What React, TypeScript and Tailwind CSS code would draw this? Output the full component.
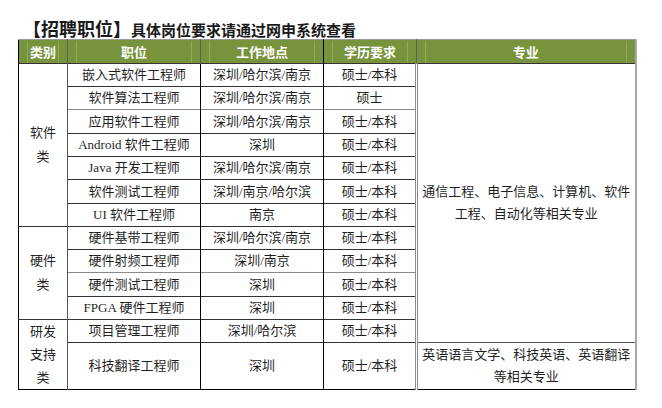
const rows: { cat?: { label: string[]; span: number }; job: string; place: string; edu: string; h: string }[] = [
  { cat: { label: ["软件", "类"], span: 7 }, job: "嵌入式软件工程师", place: "深圳/哈尔滨/南京", edu: "硕士/本科", h: "h-[23px]" },
  { job: "软件算法工程师", place: "深圳/哈尔滨/南京", edu: "硕士", h: "h-[23px]" },
  { job: "应用软件工程师", place: "深圳/哈尔滨/南京", edu: "硕士/本科", h: "h-[24px]" },
  { job: "Android 软件工程师", place: "深圳", edu: "硕士/本科", h: "h-[23px]" },
  { job: "Java 开发工程师", place: "深圳/哈尔滨/南京", edu: "硕士/本科", h: "h-[23px]" },
  { job: "软件测试工程师", place: "深圳/南京/哈尔滨", edu: "硕士/本科", h: "h-[24px]" },
  { job: "UI 软件工程师", place: "南京", edu: "硕士/本科", h: "h-[23px]" },
  { cat: { label: ["硬件", "类"], span: 4 }, job: "硬件基带工程师", place: "深圳/哈尔滨/南京", edu: "硕士/本科", h: "h-[23px]" },
  { job: "硬件射频工程师", place: "深圳/南京", edu: "硕士/本科", h: "h-[23px]" },
  { job: "硬件测试工程师", place: "深圳", edu: "硕士/本科", h: "h-[24px]" },
  { job: "FPGA 硬件工程师", place: "深圳", edu: "硕士/本科", h: "h-[23px]" },
  { cat: { label: ["研发", "支持", "类"], span: 2 }, job: "项目管理工程师", place: "深圳/哈尔滨", edu: "硕士/本科", h: "h-[23px]" },
  { job: "科技翻译工程师", place: "深圳", edu: "硕士/本科", h: "h-[46px]" },
]

const headers = ["类别", "职位", "工作地点", "学历要求", "专业"]

export default function App() {
  return (
    <div className="w-[662px] h-[408px] bg-white pl-[18px] pt-[17px]" style={{ fontFamily: '"Liberation Serif", "Noto Sans CJK SC", serif' }}>
      {/* Title */}
      <h1 className="pl-[5px] h-[22px] leading-[22px] font-bold text-[#1a1a1a] whitespace-nowrap" style={{ fontFamily: '"Noto Sans CJK SC", sans-serif' }}>
        <span className="text-[18px]">【招聘职位】</span>
        <span className="text-[15px]">具体岗位要求请通过网申系统查看</span>
      </h1>

      <table className="table-fixed border-collapse w-[617px] text-[13px] text-[#1f1f1f] border-l border-b border-l-black border-b-black border-t border-t-[#9a9a9a] border-r-2 border-r-[#a8a8a8]">
        <colgroup>
          <col className="w-[49px]" />
          <col className="w-[133px]" />
          <col className="w-[123px]" />
          <col className="w-[93px]" />
          <col className="w-[219px]" />
        </colgroup>
        <thead>
          <tr className="h-[24px] bg-[#77933c]">
            {headers.map((h, i) => (
              <th
                key={h}
                className={`p-0 border-r ${i === 2 ? "border-r-black" : "border-r-[#5f5f5f]"} text-white font-bold leading-[22px]`}
                style={{ fontFamily: '"Noto Sans CJK SC", sans-serif' }}
              >
                <div className="mx-[8px] h-[22px] border-x border-[#8fab57]">{h}</div>
              </th>
            ))}
          </tr>
        </thead>
        <tbody>
          {rows.map((r, i) => (
            <tr key={r.job} className={`${r.h} border-t ${i === 2 || i === 9 ? "border-t-[#8a8a8a]" : "border-t-[#333]"}`}>
              {r.cat && (
                <td rowSpan={r.cat.span} className="p-0 text-center align-middle border-r border-r-[#555] border-t border-t-[#333]">
                  <div className={r.cat.span === 2 ? "leading-[23px]" : "leading-[24px]"}>
                    {r.cat.label.map((l) => (
                      <div key={l}>{l}</div>
                    ))}
                  </div>
                </td>
              )}
              <td className="p-0 text-center border-r border-r-black whitespace-nowrap">{r.job}</td>
              <td className="p-0 text-center border-r border-r-black whitespace-nowrap">{r.place}</td>
              <td className="p-0 text-center border-r-[3px] border-double border-r-[#8a8a8a] whitespace-nowrap">{r.edu}</td>
              {i === 0 && (
                <td rowSpan={12} className="p-0 text-center align-middle leading-[22px] whitespace-nowrap border-b border-b-[#555]">
                  通信工程、电子信息、计算机、软件
                  <br />
                  工程、自动化等相关专业
                </td>
              )}
              {i === 12 && (
                <td className="p-0 text-center align-middle leading-[22px] whitespace-nowrap">
                  英语语言文学、科技英语、英语翻译
                  <br />
                  等相关专业
                </td>
              )}
            </tr>
          ))}
        </tbody>
      </table>
    </div>
  )
}
